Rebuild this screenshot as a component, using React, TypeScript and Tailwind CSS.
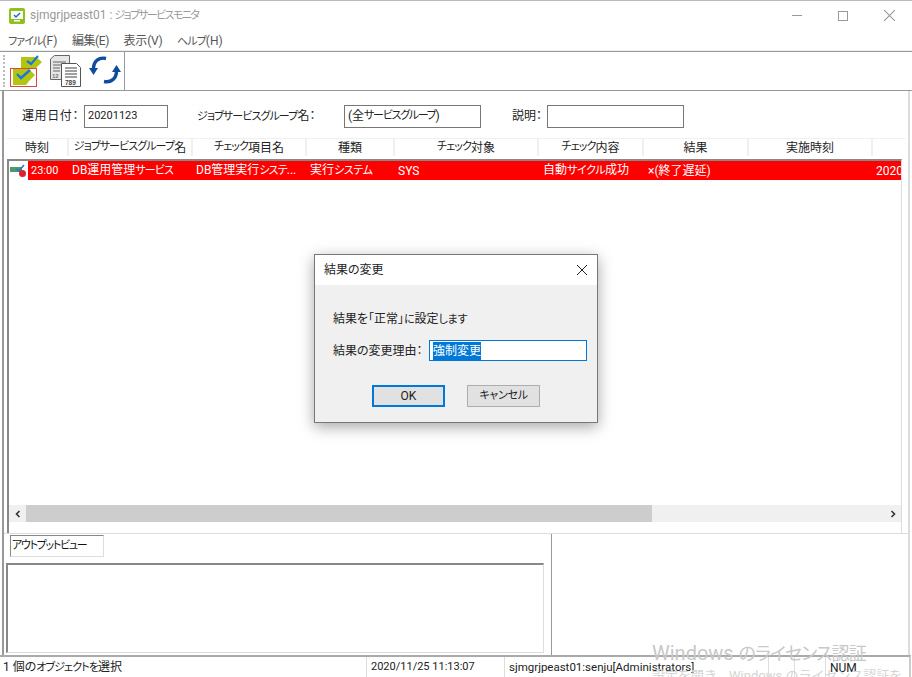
import React from 'react'

const font = 'font-["Roboto","Noto_Sans_CJK_JP",sans-serif] [font-feature-settings:"palt"]'

// Meiryo UI の細いカナに寄せる
function K({ children, t = 'tracking-[-0.9px]' }: { children: React.ReactNode; t?: string }) {
  return <span className={`text-[11px] ${t}`}>{children}</span>
}

const columns = [
  { name: <>時刻</>, w: 'w-[62px]' },
  { name: <><K>ジョブサービスグループ</K>名</>, w: 'w-[124px]' },
  { name: <><K>チェック</K>項目名</>, w: 'w-[114px]' },
  { name: <>種類</>, w: 'w-[88px]' },
  { name: <><K>チェック</K>対象</>, w: 'w-[144px]' },
  { name: <><K>チェック</K>内容</>, w: 'w-[105px]' },
  { name: <>結果</>, w: 'w-[105px]' },
  { name: <>実施時刻</>, w: 'w-[124px]' },
]

const cells = [
  { text: <span className="text-[11px]">23:00</span>, w: 'w-[39px] pl-[3px]' },
  { text: <>DB運用管理<K>サービス</K></>, w: 'w-[124px] pl-[5px]' },
  { text: <>DB管理実行<K>システ</K>...</>, w: 'w-[114px] pl-[5px]' },
  { text: <>実行<K t="tracking-[-0.4px]">システム</K></>, w: 'w-[88px] pl-[5px]' },
  { text: <>SYS</>, w: 'w-[144px] pl-[5px]' },
  { text: <>自動<K t="tracking-[-0.4px]">サイクル</K>成功</>, w: 'w-[105px] pl-[6px]' },
  { text: <>×(終了遅延)</>, w: 'w-[105px] pl-[6px]' },
  { text: null, w: 'w-[124px]' },
  { text: <>2020/</>, w: 'w-[30px] pl-[5px] overflow-hidden' },
]

function AppIcon() {
  return (
    <svg width="16" height="16" viewBox="0 0 16 16">
      <rect x="0" y="0" width="16" height="16" rx="2" fill="#8cc21a" />
      <rect x="2" y="3" width="12" height="8" fill="#fff" />
      <rect x="5" y="12" width="6" height="1.5" fill="#fff" />
      <path d="M5 7l2 2 4-4" fill="none" stroke="#1f6fc4" strokeWidth="1.5" />
    </svg>
  )
}

function CheckIcon() {
  return (
    <svg width="32" height="33" viewBox="0 0 32 33" className="block">
      <path d="M11 3h15l6 5-6 6-4 3H11z" fill="#b5c40e" />
      <path d="M17 7l4 3 7-8" fill="none" stroke="#1878d8" strokeWidth="2.2" />
      <rect x="0.500" y="14.500" width="26" height="18" fill="#fff" stroke="#e0443c" />
      <path d="M3 15h16l6 6-6 6-3 4H3z" fill="#b5c40e" />
      <path d="M7 20l4 4 9-8" fill="none" stroke="#1878d8" strokeWidth="2.400" />
    </svg>
  )
}

function ReportIcon() {
  return (
    <svg width="33" height="33" viewBox="0 0 33 33" className="block">
      <path d="M1.500 5l4-3.500h15v24h-19z" fill="#e6e6e6" stroke="#666" />
      <path d="M4 8h13M4 11h13M4 14h7M4 17h7" stroke="#666" strokeWidth="1.200" />
      <path d="M12.500 9.500h15l4 4v19h-19z" fill="#fff" stroke="#555" />
      <path d="M16 14h12M16 17h12M16 20h12M16 23h12" stroke="#444" strokeWidth="1.200" />
      <text x="16" y="31" fontSize="6.500" fontWeight="700" fill="#444" className="font-['Liberation_Sans',sans-serif]">789</text>
      <text x="3" y="24" fontSize="6" fontWeight="700" fill="#777" className="font-['Liberation_Sans',sans-serif]">12</text>
    </svg>
  )
}

function RefreshIcon() {
  return (
    <svg width="32" height="28" viewBox="0 0 32 28" className="block">
      <path d="M17 2.500C10 1 4.500 5 4.500 13" fill="none" stroke="#0f4c9c" strokeWidth="3.400" />
      <path d="M0 12h9l-4.500 7z" fill="#0f4c9c" />
      <path d="M15 25.500c7 1.500 12.500-3 12.500-10.500" fill="none" stroke="#0f4c9c" strokeWidth="3.400" />
      <path d="M23 16h9l-4.500-7z" fill="#0f4c9c" />
    </svg>
  )
}

function RowIcon() {
  return (
    <svg width="18" height="14" viewBox="0 0 18 14">
      <rect x="0" y="3" width="12" height="5" fill="#4c9a6a" />
      <path d="M6 5l3 2 5-6" fill="none" stroke="#2a72c8" strokeWidth="1.500" />
      <circle cx="12.500" cy="9.500" r="3.500" fill="#d9232e" />
    </svg>
  )
}

function Close({ color, size }: { color: string; size: number }) {
  return (
    <svg width={size} height={size} viewBox="0 0 10 10">
      <path d="M0 0l10 10M10 0L0 10" stroke={color} strokeWidth="1" />
    </svg>
  )
}

export default function App() {
  return (
    <div className={`relative w-[912px] h-[677px] overflow-hidden bg-white text-[12px] text-[#222] flex flex-col whitespace-nowrap ${font}`}>
      {/* title bar */}
      <div className="h-[30px] flex items-center border-t border-[#bbb] shrink-0">
        <div className="ml-[9px]"><AppIcon /></div>
        <span className="ml-[5px] text-[#999]">sjmgrjpeast01 :<span className="ml-[1px]" /> <K t="tracking-[-1.6px] ml-[-2px]">ジョブサービスモニタ</K></span>
        <div className="ml-auto flex items-center text-[#999]">
          <div className="w-[46px] flex justify-center"><div className="w-[10px] h-px bg-[#999]" /></div>
          <div className="w-[46px] flex justify-center"><div className="w-[10px] h-[10px] border border-[#999]" /></div>
          <div className="w-[46px] flex justify-center"><Close color="#999" size={11} /></div>
        </div>
      </div>

      {/* menu */}
      <div className="h-[20px] flex items-center pl-[8px] pt-[2px] gap-[14.5px] text-[#555] shrink-0">
        <span><K>ファイル</K>(F)</span>
        <span className="tracking-[-0.4px]">編集(E)</span>
        <span className="tracking-[-0.2px]">表示(V)</span>
        <span><K>ヘルプ</K>(H)</span>
      </div>

      {/* toolbar */}
      <div className="h-[41px] border-t border-t-[#eee] shadow-[inset_0_1px_0_#999] border-b border-b-[#999] flex items-center shrink-0">
        <div className="h-[32px] ml-[3px] w-[2px] border-l-2 border-dotted border-[#bbb]" />
        <div className="ml-[5px]"><CheckIcon /></div>
        <div className="ml-[7px]"><ReportIcon /></div>
        <div className="ml-[7px] mt-[-1px]"><RefreshIcon /></div>
        <div className="ml-[3px] h-[39px] w-px bg-[#999]" />
      </div>

      {/* main */}
      <div className="flex-1 flex flex-col min-h-0 ml-[2px] mr-[2px] border-l-2 border-r-2 border-l-[#999] border-r-[#ddd]">
        <div className="h-[443px] shrink-0 flex flex-col border-b border-[#ddd] pl-[3px] pr-[3px]">
          {/* form */}
          <div className="h-[47px] shrink-0 flex items-center pt-[3px]">
            <span className="ml-[15px] w-[62px] tracking-[0.6px]">運用日付：</span>
            <div className="w-[84px] h-[23px] border border-[#777] flex items-center pl-[3px] text-[11px]">20201123</div>
            <span className="ml-[29px] w-[147px]"><K>ジョブサービスグループ</K>名：</span>
            <div className="w-[137px] h-[23px] border border-[#777] flex items-center pl-[3px]">(全<K t="tracking-[-1.3px]">サービスグループ</K>)</div>
            <span className="ml-[31px] w-[35px]">説明：</span>
            <div className="w-[137px] h-[23px] border border-[#777]" />
          </div>

          {/* header */}
          <div className="h-[21px] flex shrink-0 border-t border-[#f0f0f0] pb-[3px]">
            {columns.map((c, i) => (
              <div key={i} className={`${c.w} shrink-0 border-r-2 border-[#f0f0f0] flex items-center justify-center`}>
                {c.name}
              </div>
            ))}
          </div>

          {/* list */}
          <div className="flex-1 min-h-0 flex flex-col border-t-2 border-l-2 border-[#888] border-r border-r-[#ddd] mr-[3px]">
            <div className="h-[19px] flex items-center shrink-0">
              <div className="w-[21px] pl-px"><RowIcon /></div>
              <div className="flex-1 h-full bg-[#ff0000] text-white flex items-center">
                {cells.map((c, i) => (
                  <div key={i} className={`${c.w} shrink-0`}>{c.text}</div>
                ))}
              </div>
            </div>
            <div className="flex-1" />
            <div className="h-[17px] flex items-center bg-[#f0f0f0] shrink-0 mb-[11px]">
              <div className="w-[17px] flex justify-center text-[#333]">
                <svg width="8" height="8" viewBox="0 0 8 8"><path d="M5.500 1L2.500 4l3 3" fill="none" stroke="#333" strokeWidth="1.600" /></svg>
              </div>
              <div className="w-[626px] h-full bg-[#cdcdcd]" />
              <div className="flex-1" />
              <div className="w-[17px] flex justify-center">
                <svg width="8" height="8" viewBox="0 0 8 8"><path d="M2.500 1l3 3-3 3" fill="none" stroke="#333" strokeWidth="1.600" /></svg>
              </div>
            </div>
          </div>
        </div>

        {/* output */}
        <div className="flex-1 min-h-0 flex">
          <div className="w-[548px] shrink-0 border-r border-[#999] flex flex-col pt-[1px] pl-[2px] pr-[7px]">
            <div className="ml-[4px] w-[94px] h-[22px] border border-[#ddd] border-t-[#888] border-l-[#888] flex items-center pl-px text-[#111]"><K t="tracking-[-1.3px]">アウトプットビュー</K></div>
            <div className="mt-[6px] h-[90px] border-t-2 border-l-2 border-r border-b border-t-[#888] border-l-[#888] border-r-[#ddd] border-b-[#ddd]" />
          </div>
        </div>
      </div>

      {/* status bar */}
      <div className="h-[22px] shrink-0 flex items-center border-t-2 border-[#aaa] border-r-2 border-r-[#ccc] mr-px text-[#222]">
        <div className="w-[366px] pl-[3px] pt-px">1 個の<K>オブジェクトを</K>選択</div>
        <div className="w-[138px] h-full border-l border-[#ddd] flex items-center pl-[4px] pt-px text-[11px]">2020/11/25 11:13:07</div>
        <div className="w-[264px] h-full border-l border-[#ddd] flex items-center pl-[4px] pt-px text-[11.5px]">sjmgrjpeast01:senju[Administrators]</div>
        <div className="w-[26px] h-full border-l border-[#ddd]" />
        <div className="w-[31px] h-full border-l border-[#ddd]" />
        <div className="flex-1 h-full border-l border-[#ddd] flex items-center pl-[4px] pt-px">NUM</div>
      </div>

      {/* Windows watermark */}
      <div className="absolute left-[652px] top-[640px] text-[20px] leading-[26px] text-[#c8c8c8] pointer-events-none">Windows <span className="text-[18px] tracking-[-0.8px]">のライセンス認証</span></div>
      <div className="absolute left-[652px] top-[668px] text-[13px] leading-[16px] text-[#d4d4d4] pointer-events-none [font-feature-settings:normal]">設定を開き、Windows のライセンス認証を</div>

      {/* dialog */}
      <div className="absolute left-[314px] top-[254px] w-[284px] h-[169px] border border-[#777] bg-[#f0f0f0] shadow-[0_4px_14px_rgba(0,0,0,0.35)] flex flex-col">
        <div className="h-[30px] bg-white flex items-center pl-[9px] shrink-0">
          <span>結果の変更</span>
          <div className="ml-auto mr-[10px]"><Close color="#222" size={10} /></div>
        </div>
        <div className="pl-[18px] pt-[26px] leading-[16px]">結果を「正常」<K t="tracking-[-0.2px]">に</K>設定<K t="tracking-[-0.2px]">します</K></div>
        <div className="pl-[18px] mt-[12px] flex items-center">
          <span className="w-[96px]">結果の変更理由：</span>
          <div className="w-[158px] h-[21px] border border-[#0078d7] bg-white flex items-center pl-[3px]">
            <span className="bg-[#0078d7] text-white">強制変更</span>
          </div>
        </div>
        <div className="flex pl-[57px] gap-[22px] mt-[24px]">
          <div className="w-[73px] h-[22px] bg-[#e1e1e1] border-2 border-[#0078d7] flex items-center justify-center">OK</div>
          <div className="w-[73px] h-[22px] bg-[#e1e1e1] border border-[#adadad] flex items-center justify-center"><K t="tracking-[-0.3px]">キャンセル</K></div>
        </div>
      </div>
    </div>
  )
}
